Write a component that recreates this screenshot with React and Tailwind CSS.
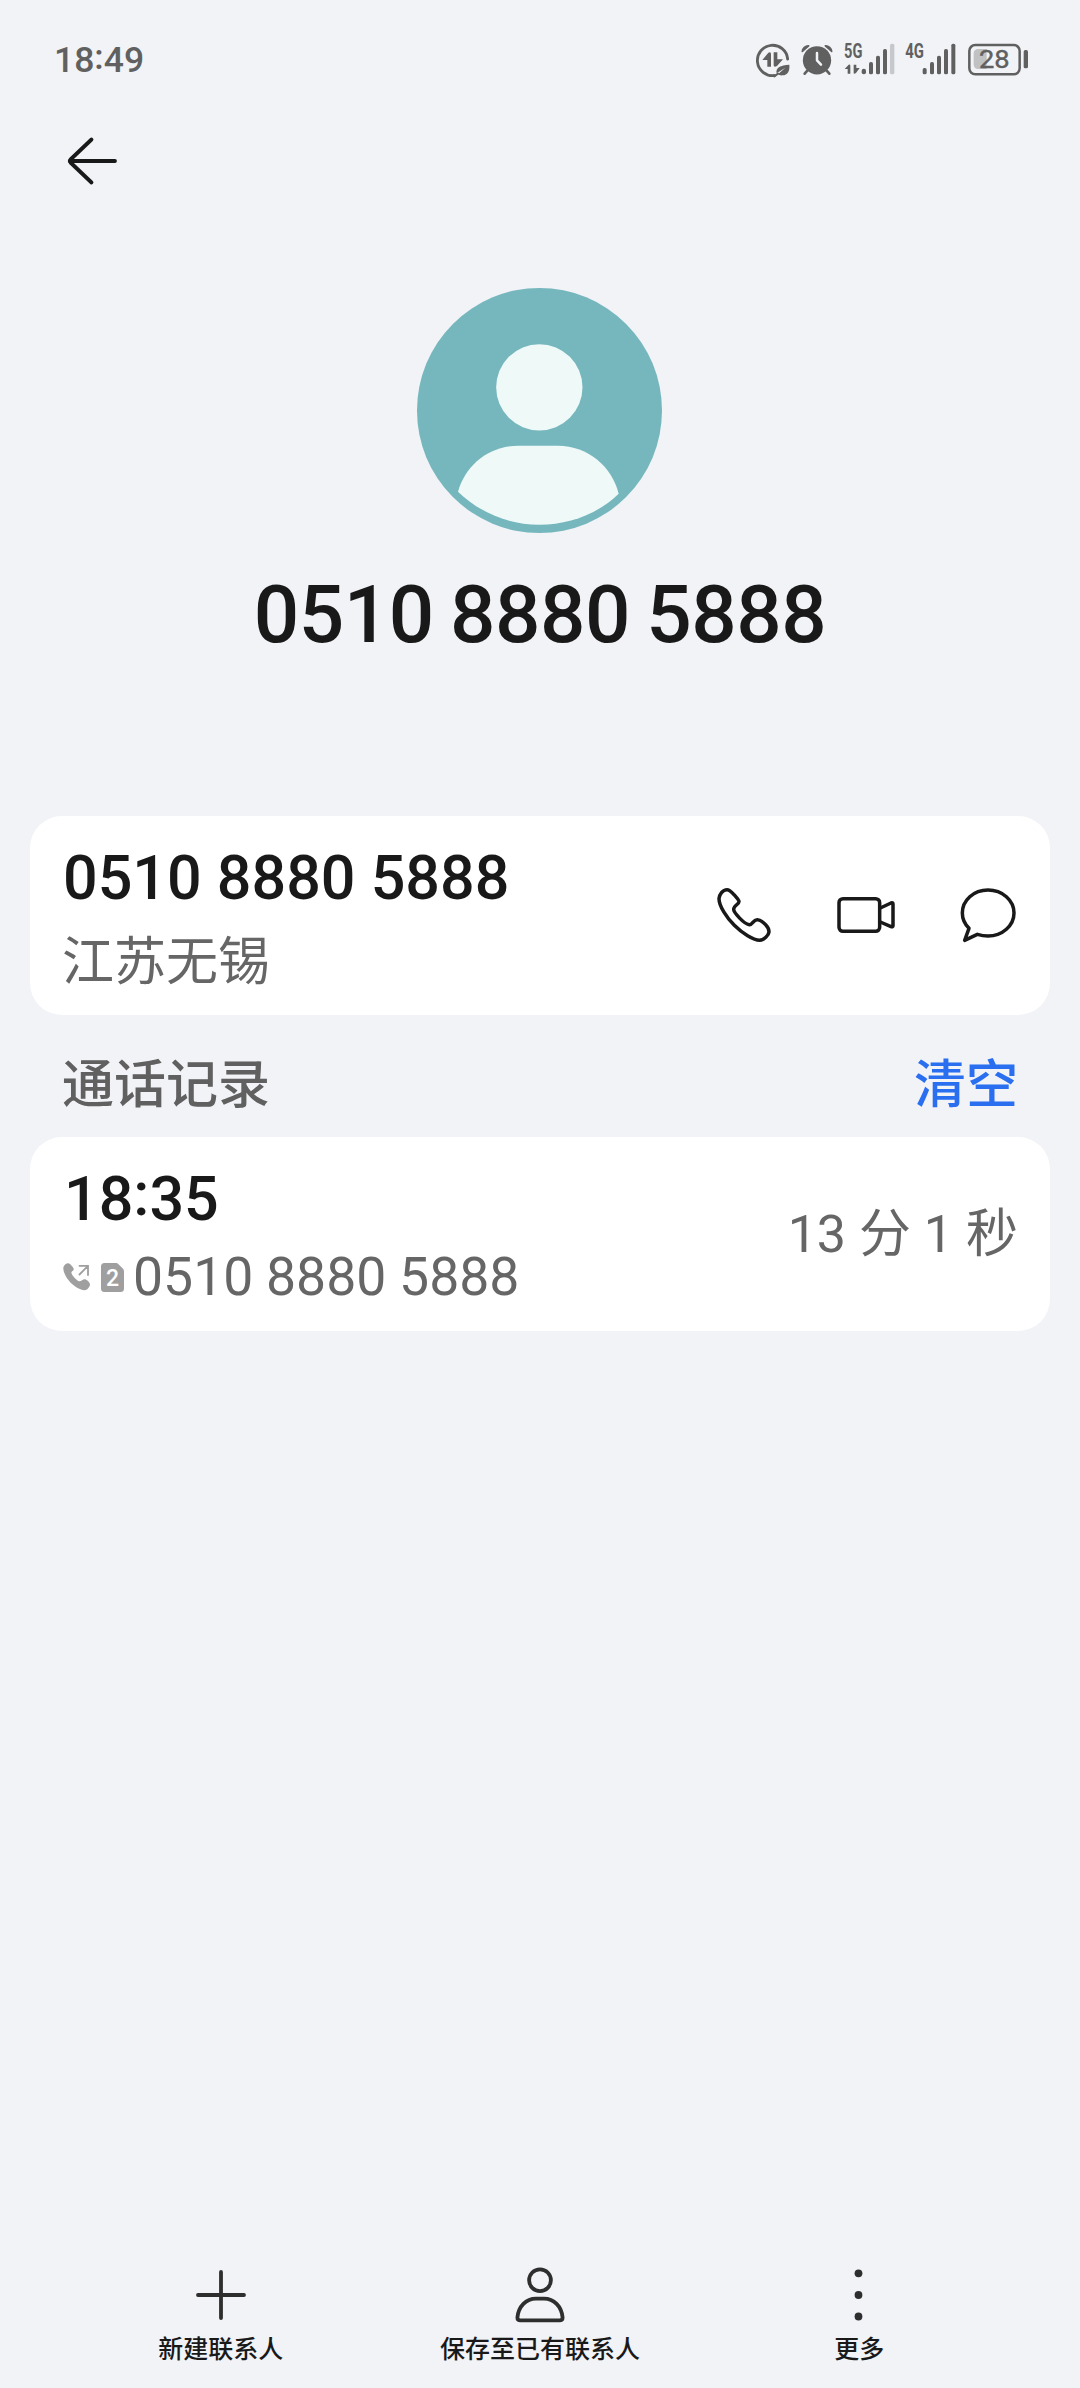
import React from "react";

const bars = (xs, tops) =>
  xs.map((x, i) => (
    <rect key={x} x={x} y={tops[i]} width="12" height={133 - tops[i]} rx="5" />
  ));

function DataSaverIcon() {
  return (
    <svg className="h-9 w-9" viewBox="45 39 108 108" fill="#606060">
      <path d="M143 87A45.500 45.500 0 1 0 103 136.500" fill="none" stroke="#606060" strokeWidth="8.500" strokeLinecap="round" />
      <path d="M67 90L85 68Q93 64 93 72V110H82V90Z" />
      <path d="M101 67H112V88H129L111 108Q101 113 101 105Z" />
      <path d="M148 104C150 124 142 135 128 136C122 137 117 135 114 133L136 113L110 130C106 113 122 105 148 104Z" />
      <path d="M103 139L114 131" stroke="#606060" strokeWidth="6" strokeLinecap="round" />
    </svg>
  );
}

function AlarmIcon() {
  return (
    <svg className="h-9 w-[34px]" viewBox="180 39 102 108" fill="none" stroke="#606060" strokeLinecap="round">
      <circle cx="231" cy="91" r="42.500" fill="#606060" stroke="none" />
      <path d="M187 64C188 55 196 47 206 47.500L187 64ZM275 64C274 55 266 47 256 47.500L275 64Z" fill="#606060" strokeWidth="5" strokeLinejoin="round" />
      <path d="M202 122L194 131M260 122L268 131" strokeWidth="8" />
      <path d="M231 69V91L243 104" stroke="#f1f3f7" strokeWidth="7.500" strokeLinejoin="round" />
    </svg>
  );
}

function Signal5G() {
  return (
    <svg className="h-9 w-[52px] overflow-visible" viewBox="312 39 156 108" fill="#606060">
      <text x="312" y="83" fontSize="58" fontWeight="700" textLength="55" lengthAdjust="spacingAndGlyphs">5G</text>
      <path d="M314 117L326 104Q331 102 331 107V131H323V117Z" />
      <path d="M341 104H349V114H359L348 129Q341 134 341 128Z" />
      <rect x="365" y="116" width="13" height="17" rx="6" />
      {bars([387, 408, 429], [96, 77, 57])}
      <rect x="450" y="41" width="13" height="92" rx="5" fill="#c6c8cb" />
    </svg>
  );
}

function Signal4G() {
  return (
    <svg className="h-9 w-[52px] overflow-visible" viewBox="495 39 156 108" fill="#606060">
      <text x="496" y="83" fontSize="58" fontWeight="700" textLength="56" lengthAdjust="spacingAndGlyphs">4G</text>
      {bars([548, 570, 591, 612, 634], [114, 96, 77, 57, 41])}
    </svg>
  );
}

function BatteryIcon() {
  return (
    <svg className="h-9 w-[62px] overflow-visible" viewBox="681 39 186 108" fill="#606060">
      <rect x="688" y="45" width="151" height="88" rx="18" fill="none" stroke="#606060" strokeWidth="7.500" />
      <path d="M715 57H740V117H715Q701 117 701 103V71Q701 57 715 57Z" fill="#bfc1c3" />
      <rect x="851" y="60" width="13" height="55" rx="5" />
      <text x="717" y="114" fontSize="77" textLength="92" lengthAdjust="spacingAndGlyphs" stroke="#606060" strokeWidth="1.200">28</text>
    </svg>
  );
}

function Avatar() {
  return (
    <svg className="h-[245px] w-[245px]" viewBox="50 53 735 735">
      <circle cx="417.500" cy="420.500" r="367.500" fill="#76b7be" />
      <circle cx="417" cy="351" r="129.500" fill="#eff9f8" />
      <path d="M173 664C195 585 265 526 355 526H472C565 526 635 590 655 670C590 733 505 763 417 763C325 763 240 728 173 664Z" fill="#eff9f8" />
    </svg>
  );
}

const line = {
  fill: "none",
  stroke: "#191919",
  strokeWidth: 10.5,
  strokeLinejoin: "round",
  strokeLinecap: "round",
};

function PhoneIcon() {
  return (
    <svg className="h-14 w-14" viewBox="78 261 168 168" {...line}>
      <path d="M87 296C88 284 98 269 111 269C119 269 124 275 132 284C140 293 146 299 147 304C148 312 131 317 131 328C131 338 163 373 178 374C188 375 189 360 201 359C210 358 219 366 227 374C235 382 237 389 237 396C236 406 222 420 209 421C190 421 157 400 133 376C110 353 87 318 87 296Z" />
    </svg>
  );
}

function VideoIcon() {
  return (
    <svg className="h-14 w-[60px]" viewBox="438 261 180 168" {...line}>
      <rect x="447" y="296" width="122" height="98" rx="12" />
      <path d="M571 324L603 309Q609 307 609 312V377Q609 382 603 380L571 366" />
    </svg>
  );
}

function ChatIcon() {
  return (
    <svg className="h-14 w-[58px]" viewBox="807 261 174 168" {...line}>
      <path d="M837 385C825 373 817 357 817 339C817 301 851 270 894 270S972 301 972 339S937 408 894 408C883 408 872 406 862 403L824 421L837 385Z" />
    </svg>
  );
}

function OutgoingIcon() {
  return (
    <svg className="h-7 w-7" viewBox="0 0 28 28" fill="#9f9f9f">
      <path d="M.3 5C.5 2.500 3 .2 5 .2C7 .2 10.200 4 10.700 5.800C11.200 7.500 8 8.500 8.400 10C9.500 13 13 17 16 18.200C18 18.800 20 15.800 22 16.200C24 16.800 27.200 19.500 27 21.800C26.500 24.500 24 27.300 21.500 27.200C12 26.500 .3 14 .3 5Z" />
      <path d="M16.500 2.800H25V12M25 2.800L16.500 11.500" fill="none" stroke="#9f9f9f" strokeWidth="1.800" strokeLinecap="round" />
    </svg>
  );
}

function Sim2Icon() {
  return (
    <svg className="h-[29px] w-[23px]" viewBox="0 0 23 29">
      <path d="M3.500 0H15Q16.500 0 17.500 1.200L22 5.800Q23 6.800 23 8.500V25.500Q23 29 19.500 29H3.500Q0 29 0 25.500V3.500Q0 0 3.500 0Z" fill="#9f9f9f" />
      <text x="11.600" y="23.200" fontSize="23" fontWeight="500" textAnchor="middle" fill="#fff">2</text>
    </svg>
  );
}

function NavItem({ label, children }) {
  return (
    <div className="flex flex-col items-center">
      <svg className="h-[60px] w-[60px]" viewBox="-30 -30 60 60" fill="none" stroke="#2e2e2e" strokeWidth="3.800" strokeLinecap="round" strokeLinejoin="round">
        {children}
      </svg>
      <span className="mt-[9px] h-8 text-[25px] leading-8 font-medium whitespace-nowrap text-[#191919]">{label}</span>
    </div>
  );
}

export default function App() {
  return (
    <div className="flex h-[2388px] w-[1080px] flex-col bg-[#f1f3f7] font-['Roboto','Noto_Sans_CJK_SC',sans-serif] text-[#191919]">
      <header className="flex h-[118px] items-center justify-between pr-[51px] pl-[54px]">
        <span className="pt-px text-[35.5px] leading-[42px] font-medium text-[#606060]">
          18<span className="relative -top-[3px]">:</span>49
        </span>
        <div className="flex items-center pt-1">
          <DataSaverIcon />
          <span className="w-[9px]" />
          <AlarmIcon />
          <span className="w-2.5" />
          <Signal5G />
          <span className="w-[9px]" />
          <Signal4G />
          <span className="w-2.5" />
          <BatteryIcon />
        </div>
      </header>

      <div className="flex h-[86px] items-center pl-[66px]">
        <svg className="h-[54px] w-[54px]" viewBox="-27 -27 54 54" fill="none" stroke="#191919" strokeWidth="3.800" strokeLinecap="round" strokeLinejoin="round">
          <path d="M22 0H-22M-1.500 -21.500L-22.500 -1.500Q-24 0 -22.500 1.500L-1.500 21.500" />
        </svg>
      </div>

      <div className="flex h-[612px] flex-col items-center pt-[84px] pr-px">
        <Avatar />
        <h1 className="mt-8 -mr-px text-[80px] leading-[100px] font-medium tracking-[-0.5px] whitespace-nowrap [word-spacing:-3px]">0510 8880 5888</h1>
      </div>

      <section className="mx-[30px] flex h-[199px] items-center justify-between rounded-[32px] bg-white pr-[33px] pl-8">
        <div className="flex h-full flex-col pt-[26px]">
          <span className="h-[72px] pl-px text-[61px] leading-[72px] font-medium whitespace-nowrap">0510 8880 5888</span>
          <span className="mt-3 h-[74px] text-[52px] leading-[74px] text-[#666]">江苏无锡</span>
        </div>
        <div className="flex items-center pb-px">
          <PhoneIcon />
          <span className="w-16" />
          <VideoIcon />
          <span className="w-[63px]" />
          <ChatIcon />
        </div>
      </section>

      <div className="flex h-[122px] items-center justify-between pt-[19px] pr-[62px] pl-[62px] text-[52px] leading-[74px] font-medium">
        <span className="text-[#606060]">通话记录</span>
        <span className="text-[#2a6ff0]">清空</span>
      </div>

      <section className="mx-[30px] flex h-[194px] items-center justify-between rounded-[32px] bg-white pr-8 pl-[33px]">
        <div className="flex h-full flex-col pt-[26px]">
          <span className="h-[72px] pl-px text-[61px] leading-[72px] font-medium">
            18<span className="relative -top-[5px]">:</span>35
          </span>
          <div className="mt-[11px] flex h-[62px] items-center">
            <OutgoingIcon />
            <span className="w-2.5" />
            <Sim2Icon />
            <span className="ml-[9px] text-[53.5px] leading-[62px] whitespace-nowrap text-[#666] [word-spacing:-0.5px]">0510 8880 5888</span>
          </div>
        </div>
        <span className="pt-0.5 text-[52px] leading-[74px] whitespace-nowrap text-[#666]">13 分 1 秒</span>
      </section>

      <div className="grow" />

      <nav className="grid h-[123px] grid-cols-3 px-[61px]">
        <NavItem label="新建联系人">
          <path d="M-23 0H23M0 -23V23" />
        </NavItem>
        <NavItem label="保存至已有联系人">
          <circle cx="0" cy="-14.800" r="10.900" />
          <path d="M-4 3.600H4C14 3.600 21.500 11.500 22.600 22.500Q22.600 25.400 19.700 25.400H-19.700Q-22.600 25.400 -22.600 22.500C-21.500 11.500 -14 3.600 -4 3.600Z" />
        </NavItem>
        <NavItem label="更多">
          <g fill="#2e2e2e" stroke="none">
            <circle cx="-0.500" cy="-21.700" r="3.900" />
            <circle cx="-0.500" cy="0" r="3.900" />
            <circle cx="-0.500" cy="21.500" r="3.900" />
          </g>
        </NavItem>
      </nav>
    </div>
  );
}
